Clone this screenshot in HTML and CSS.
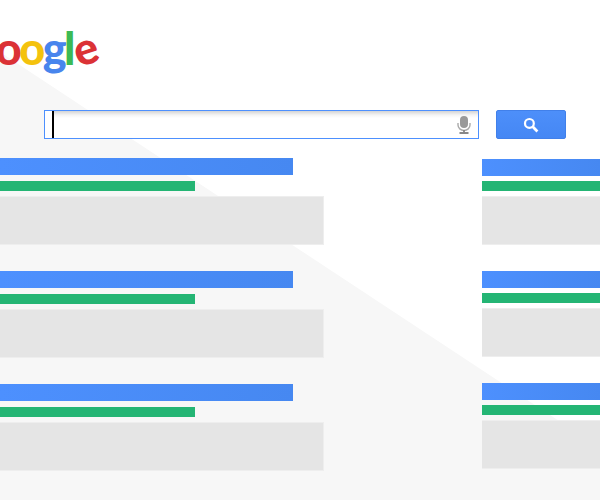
FILE: index.html
```html
<!DOCTYPE html>
<html lang="en">
<head>
    <meta charset="UTF-8">
    <meta name="viewport" content="width=device-width, initial-scale=1.0">
    <title>Google search results</title>
    <link rel="stylesheet" href="styles.css">
</head>
<body>

<div class="page">
    <div class="logo"><span class="blue">G</span><span class="red">o</span><span class="yellow">o</span><span class="blue">g</span><span class="green">l</span><span class="red tilt">e</span></div>

    <!-- Search box and button -->
    <div class="search-row">
        <div class="search-box">
            <span class="cursor"></span>
            <div class="search-input">
                <svg class="mic" width="14" height="18" viewBox="0 0 14 18">
                    <rect x="3" y="0" width="8" height="12" rx="4" fill="#999"/>
                    <path d="M1 7v2a6 5.500 0 0 0 12 0V7" fill="none" stroke="#aaa" stroke-width="1.4"/>
                    <path d="M7 14v2.500M2.500 17h9" fill="none" stroke="#888" stroke-width="1.800"/>
                </svg>
            </div>
        </div>
        <div class="search-btn">
            <svg width="16" height="16" viewBox="0 0 16 16">
                <circle cx="6.400" cy="6.400" r="4.400" fill="none" stroke="#fff" stroke-width="2.200"/>
                <path d="M9.800 9.800l4.600 4.600" fill="none" stroke="#fff" stroke-width="2.800"/>
            </svg>
        </div>
    </div>

    <!-- Result placeholders -->
    <div class="results">
        <div class="column main">
            <div class="result"><div class="title"></div><div class="url"></div><div class="snippet"></div></div>
            <div class="result"><div class="title"></div><div class="url"></div><div class="snippet"></div></div>
            <div class="result"><div class="title"></div><div class="url"></div><div class="snippet"></div></div>
        </div>
        <div class="column side">
            <div class="result"><div class="title"></div><div class="url"></div><div class="snippet"></div></div>
            <div class="result"><div class="title"></div><div class="url"></div><div class="snippet"></div></div>
            <div class="result"><div class="title"></div><div class="url"></div><div class="snippet"></div></div>
        </div>
    </div>
</div>

</body>
</html>
```

FILE: styles.css
```css
/* Global styling */
body {
    margin: 0;
    background-color: #ffffff;
    font-family: 'Lato', sans-serif;
}

.page {
    position: relative;
    width: 600px;
    height: 500px;
    overflow: hidden;
}

/* Grey diagonal behind everything */
.page::before {
    content: "";
    position: absolute;
    inset: 0;
    background-color: #f7f7f7;
    clip-path: polygon(0 52px, 600px 448px, 600px 500px, 0 500px);
}

/* Logo */
.logo {
    position: relative;
    height: 110px;
    margin-left: -34px;
    padding-top: 20px;
    box-sizing: border-box;
    font-size: 45px;
    line-height: 56px;
    font-weight: 900;
    letter-spacing: -2.5px;
    white-space: nowrap;
}

.blue { color: #4885ed; }
.red { color: #db3236; }
.yellow { color: #f4c20d; }
.green { color: #3cba54; }

.tilt {
    display: inline-block;
    transform: rotate(-18deg);
}

/* Search row */
.search-row {
    position: relative;
    display: flex;
    height: 29px;
    margin-left: 44px;
    gap: 17px;
}

.search-box {
    display: flex;
    width: 435px;
    padding-left: 7px;
    box-sizing: border-box;
    background-color: #ffffff;
    border: 1px solid #4d90fe;
}

.cursor {
    width: 2px;
    background-color: #000000;
}

.search-input {
    flex: 1;
    display: flex;
    align-items: center;
    justify-content: flex-end;
    padding-right: 7px;
    background: linear-gradient(#d4d4d4, #f4f4f4 4px, #ffffff 7px);
}

.search-btn {
    display: flex;
    align-items: center;
    justify-content: center;
    width: 70px;
    box-sizing: border-box;
    background: linear-gradient(#4d8ffa, #4587f4);
    border: 1px solid #4180ea;
    border-radius: 2px;
}

/* Results */
.results {
    position: relative;
    display: flex;
    margin-top: 19px;
}

.column.main {
    width: 324px;
    margin-right: 158px;
    flex: none;
}

.column.side {
    flex: 1;
    margin-top: 1px;
}

.result {
    margin-bottom: 26px;
}

.title {
    height: 17px;
    background: linear-gradient(to right, #4d90fe, #4688f1);
}

.url {
    height: 10px;
    margin-top: 5px;
    background-color: #24b574;
}

.snippet {
    height: 47px;
    margin-top: 5px;
    background-color: #e5e5e5;
    border-top: 1px solid #eeeeee;
    border-bottom: 1px solid #eeeeee;
}

.column.main .title { width: 293px; }
.column.main .url { width: 195px; margin-top: 6px; }
.column.main .snippet { border-right: 1px solid #eeeeee; }
```
